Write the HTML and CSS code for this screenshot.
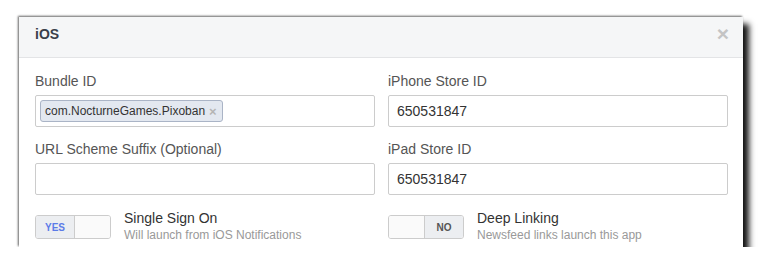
FILE: index.html
```html
<!DOCTYPE html>
<html lang="en">
<head>
    <meta charset="UTF-8">
    <meta name="viewport" content="width=device-width, initial-scale=1.0">
    <title>iOS Settings</title>
    <link rel="stylesheet" href="styles.css">
</head>
<body>
    <div class="panel">
        <div class="panel-header">
            <h2>iOS</h2>
            <span class="close">&times;</span>
        </div>
        <div class="panel-body">
            <div class="form-group">
                <label>Bundle ID</label>
                <div class="field">
                    <span class="tag">com.NocturneGames.Pixoban <span class="tag-x">&times;</span></span>
                </div>
            </div>
            <div class="form-group">
                <label>iPhone Store ID</label>
                <div class="field">650531847</div>
            </div>
            <div class="form-group">
                <label>URL Scheme Suffix (Optional)</label>
                <div class="field"></div>
            </div>
            <div class="form-group">
                <label>iPad Store ID</label>
                <div class="field">650531847</div>
            </div>
            <div class="switch-row">
                <div class="switch on">
                    <span class="switch-label">YES</span>
                    <span class="switch-knob"></span>
                </div>
                <div class="switch-text">
                    <div class="switch-title">Single Sign On</div>
                    <div class="switch-sub">Will launch from iOS Notifications</div>
                </div>
            </div>
            <div class="switch-row">
                <div class="switch off">
                    <span class="switch-knob"></span>
                    <span class="switch-label">NO</span>
                </div>
                <div class="switch-text">
                    <div class="switch-title">Deep Linking</div>
                    <div class="switch-sub">Newsfeed links launch this app</div>
                </div>
            </div>
        </div>
    </div>
</body>
</html>
```

FILE: styles.css
```css
body {
    font-family: "Liberation Sans", Arial, sans-serif;
    margin: 0;
    padding: 17px 0 0 19px;
    background: #fff;
    color: #333;
}
.panel {
    width: 724px;
    height: 230px;
    overflow: hidden;
    background: #fff;
    box-shadow: -1px -1px 2px rgba(0, 0, 0, 0.6), 6px 7px 6px rgba(0, 0, 0, 0.92);
}
.panel-header {
    display: flex;
    align-items: center;
    justify-content: space-between;
    height: 41px;
    padding: 0 14px 7px 16px;
    box-sizing: border-box;
    background: #f5f6f7;
    border-bottom: 1px solid #e3e4e6;
}
.panel-header h2 {
    margin: 0;
    font-size: 14px;
    font-weight: bold;
    color: #3a3f4a;
}
.close {
    font-size: 21px;
    font-weight: bold;
    color: #c4c4c4;
    line-height: 1;
}
.panel-body {
    display: grid;
    grid-template-columns: 340px 340px;
    column-gap: 13px;
    padding: 15px 16px 0 16px;
}
.form-group {
    margin-bottom: 14px;
}
.form-group label {
    display: block;
    font-size: 14px;
    line-height: 16px;
    color: #555;
    margin-bottom: 6px;
}
.field {
    box-sizing: border-box;
    height: 32px;
    border: 1px solid #ccc;
    border-radius: 2px;
    padding: 0 8px 0 4px;
    display: flex;
    align-items: center;
    font-size: 14px;
    color: #333;
}
.form-group:nth-child(even) .field {
    padding-left: 8px;
}
.tag {
    display: inline-flex;
    align-items: center;
    height: 22px;
    box-sizing: border-box;
    padding: 0 5px 0 4px;
    background: #e3e8f0;
    border: 1px solid #aab4c6;
    border-radius: 3px;
    font-size: 12px;
    color: #333;
}
.tag-x {
    margin-left: 4px;
    color: #b5b5b5;
    font-weight: bold;
    font-size: 13px;
}
.switch-row {
    display: flex;
    align-items: flex-start;
    margin-top: 6px;
}
.switch {
    display: flex;
    box-sizing: border-box;
    width: 76px;
    height: 24px;
    border: 1px solid #ccc;
    border-radius: 3px;
    overflow: hidden;
    flex-shrink: 0;
}
.switch-label {
    width: 38px;
    display: flex;
    align-items: center;
    justify-content: center;
    background: #eceef1;
    font-size: 10px;
    font-weight: bold;
}
.switch.on .switch-label {
    color: #5b7be8;
}
.switch.off .switch-label {
    color: #555;
}
.switch-knob {
    flex: 1;
    background: #fafafa;
}
.switch.on .switch-knob {
    border-left: 1px solid #ccc;
}
.switch.off .switch-knob {
    border-right: 1px solid #ccc;
}
.switch-text {
    margin-left: 13px;
    margin-top: -5px;
}
.switch-title {
    font-size: 14px;
    line-height: 16px;
    color: #333;
}
.switch-sub {
    font-size: 12px;
    line-height: 16px;
    margin-top: 1px;
    color: #999;
}
```
